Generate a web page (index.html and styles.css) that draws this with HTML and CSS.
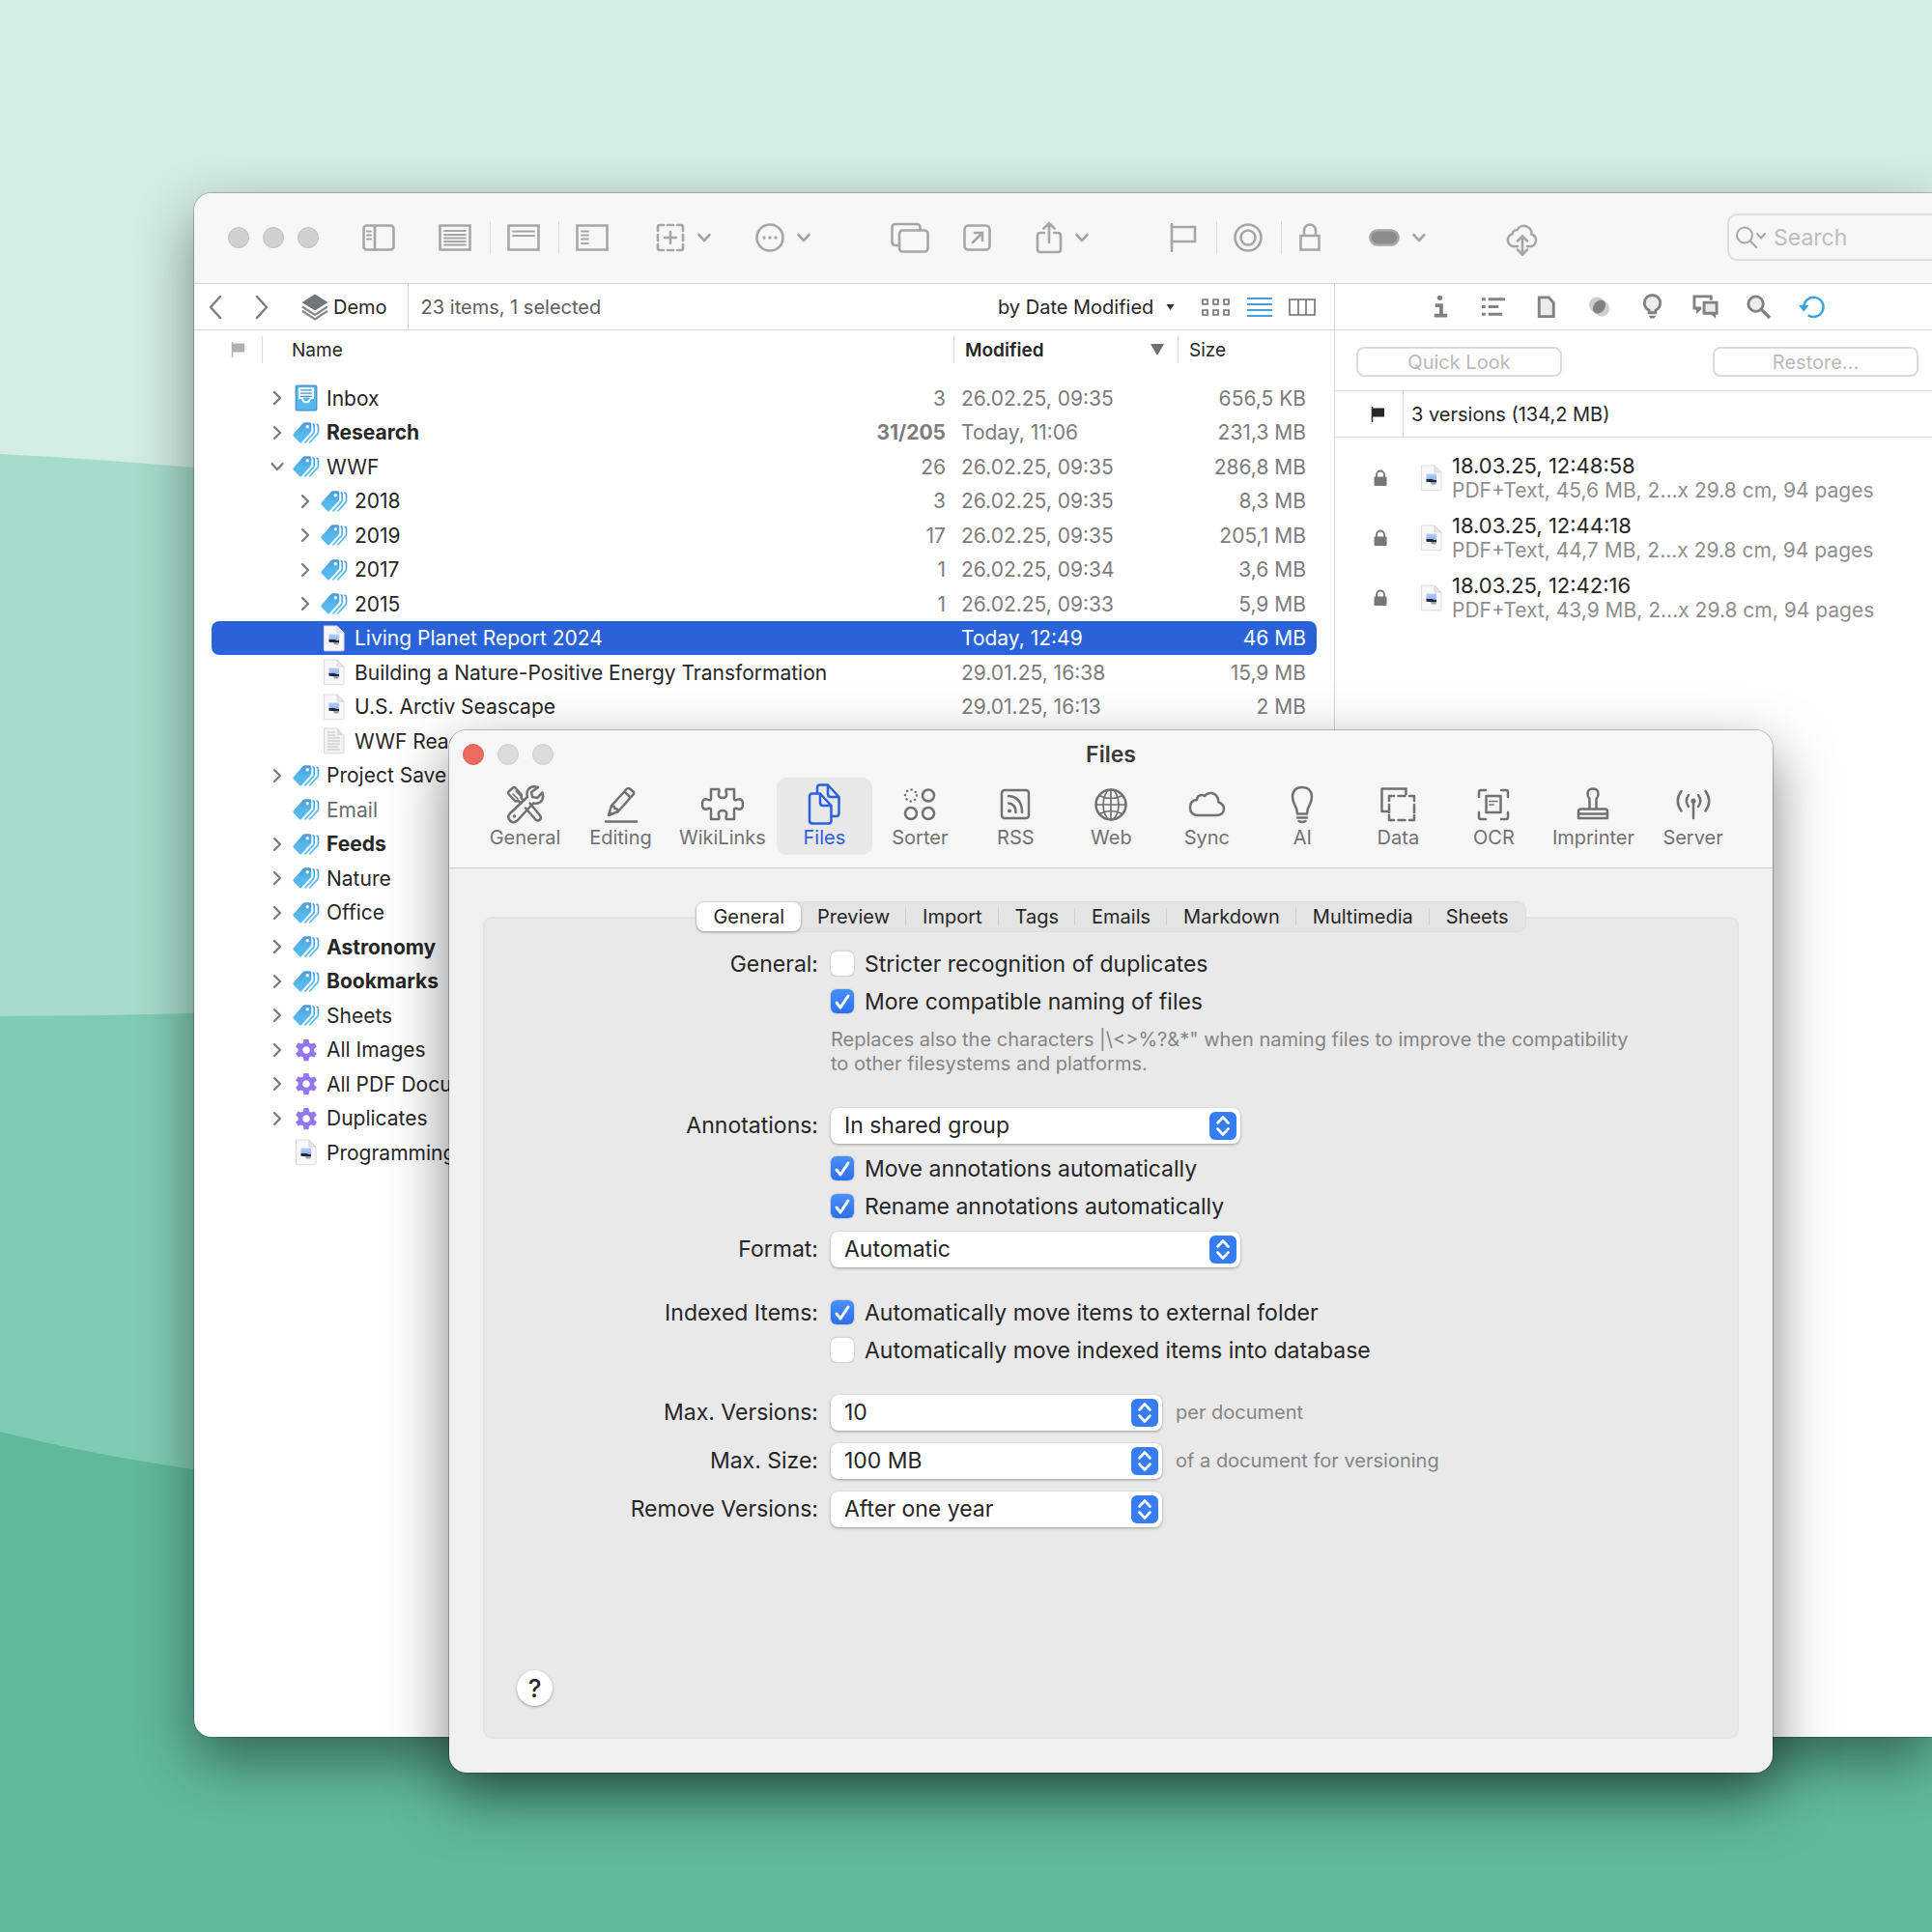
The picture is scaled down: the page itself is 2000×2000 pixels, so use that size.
FILE: index.html
```html
<!DOCTYPE html>
<html lang="en">
<head>
    <meta charset="UTF-8">
    <meta name="viewport" content="width=device-width, initial-scale=1.0">
    <title>Files</title>
    <link rel="stylesheet" href="styles.css">
</head>
<body>
    <!-- Shared icons -->
    <svg class="sprite" aria-hidden="true">
        <defs>
            <linearGradient id="blueFill" x1="0" y1="0" x2="0" y2="1">
                <stop offset="0" stop-color="#4a9bd3"/>
                <stop offset="0.5" stop-color="#55b6ec"/>
                <stop offset="1" stop-color="#58bcf3"/>
            </linearGradient>
            <linearGradient id="sky" x1="0" y1="0" x2="0" y2="1">
                <stop offset="0" stop-color="#b9cdf3"/>
                <stop offset="1" stop-color="#8fb2ea"/>
            </linearGradient>
        </defs>
        <symbol id="right" viewBox="0 0 14 16"><path d="M4 2l6 6-6 6" fill="none" stroke="currentColor" stroke-width="2.2" stroke-linecap="round" stroke-linejoin="round"/></symbol>
        <symbol id="down" viewBox="0 0 14 16"><path d="M1.500 5l5.500 6 5.500-6" fill="none" stroke="currentColor" stroke-width="2.200" stroke-linecap="round" stroke-linejoin="round"/></symbol>
        <symbol id="tags" viewBox="0 0 28 22">
            <path fill="url(#blueFill)" fill-rule="evenodd" d="M.6 12.600L10.500 1.300Q11.600.3 13 .3h4.500Q19.300.5 19.300 2.300V8.500Q19.300 9.700 18.500 10.600L9 21Q8 22 7 21L.8 14.400Q0 13.500.6 12.600zM15.200 3a1.700 1.700 0 1 0 .1 0z"/>
            <path fill="none" stroke="url(#blueFill)" stroke-width="1.700" d="M20.500 1.500q1.700.5 1.700 2V9.800q0 1-.7 1.800L12.500 21.500M24.500 2q2 .5 2 2.200v6.100q0 1-.7 1.800L17.300 21.500"/>
        </symbol>
        <symbol id="inbox" viewBox="0 0 22 26">
            <rect x="1" y="1" width="20" height="24" rx="1.500" fill="#56b7ee" stroke="#3d93cc" stroke-width="1.200"/>
            <path d="M3.500 3h15v11h-3q-.5 4-4.500 4t-4.500-4h-3z" fill="#fff"/>
            <path d="M5.500 5.500h11M5.500 8.500h11M5.500 11.500h11" fill="none" stroke="#3d93cc" stroke-width="1.300"/>
            <path d="M8 12.500h6q-.2 3.500-3 3.500t-3-3.500z" fill="#56b7ee"/>
        </symbol>
        <symbol id="gear" viewBox="0 0 24 24">
            <path fill="#9377ea" fill-rule="evenodd" d="M9.500 1h5l.6 3.400 2.200 1.200 3.200-1.200 2.400 4.200-2.600 2.200v2.400l2.600 2.200-2.400 4.200-3.200-1.200-2.200 1.200-.6 3.600h-5l-.6-3.600-2.200-1.200-3.200 1.200-2.400-4.200 2.600-2.200v-2.400L1.100 8.600l2.400-4.200 3.200 1.200 2.200-1.200zM12 8.200a3.800 3.800 0 1 0 .1 0z"/>
        </symbol>
        <symbol id="pdf" viewBox="0 0 24 28">
            <path d="M1.500 1H15l7 7v18q0 .8-.8.800H2.300q-.8 0-.8-.8z" fill="#f8f8f8" stroke="#dcdcdc"/>
            <path d="M15 1v7h7z" fill="#e6e6e6" stroke="#cfcfcf" stroke-width=".7"/>
            <path d="M6.500 9.500H17V16H6.500z" fill="url(#sky)"/>
            <path d="M6.500 15h6l2 1H17v2.500l-10.500-.8z" fill="#20283c"/>
            <path d="M11 18h5.500v2.500H12z" fill="#9a9da3"/>
        </symbol>
        <symbol id="textdoc" viewBox="0 0 24 28">
            <path d="M1.500 1H15l7 7v18q0 .8-.8.800H2.300q-.8 0-.8-.8z" fill="#f3f3f3" stroke="#d6d6d6"/>
            <path d="M15 1v7h7z" fill="#dedede"/>
            <path d="M5 5h8M5 8h8M5 11h13M5 14h13M5 17h13M5 20h11M5 23h13" stroke="#c2c2c2" stroke-width="1.200"/>
        </symbol>
        <symbol id="flag" viewBox="0 0 16 20"><path d="M1.500 2v16" stroke="currentColor" stroke-width="1.500"/><path d="M2 3.500h12v9H2z" fill="currentColor"/></symbol>
        <symbol id="locked" viewBox="0 0 16 20"><path d="M4 9V6.500a4 4 0 0 1 8 0V9" fill="none" stroke="currentColor" stroke-width="1.800"/><rect x="1.500" y="8.500" width="13" height="9.500" rx="1" fill="currentColor"/></symbol>
        <symbol id="chevron" viewBox="0 0 16 12"><path d="M2.500 3L8 9l5.500-6" fill="none" stroke="currentColor" stroke-width="2.600" stroke-linecap="round" stroke-linejoin="round"/></symbol>
    </svg>

    <div class="desktop">
        <svg class="wallpaper" viewBox="0 0 2000 2000" preserveAspectRatio="none" aria-hidden="true">
            <path fill="#a6dccb" d="M0 470Q100 475 200 484L900 560V1200H0z"/>
            <path fill="#80cbb3" d="M0 1052Q100 1052 200 1049L900 1020V1700H0z"/>
            <path fill="#5fb99a" d="M0 1482Q90 1505 200 1521L900 1640H2000V2000H0z"/>
        </svg>

        <main class="window browser">
            <header class="toolbar">
                <div class="lights"><i></i><i></i><i></i></div>
                <div class="tools">
                    <button type="button" aria-label="Sidebar"><svg width="34" height="28" viewBox="0 0 34 28"><rect x="1.500" y="1.500" width="31" height="25" rx="3"/><path d="M13 2v24"/><path class="thin" d="M5 7.500h4M5 11.500h4M5 15.500h4"/></svg></button>
                </div>
                <div class="tools joined">
                    <button type="button" aria-label="List"><svg width="34" height="28" viewBox="0 0 34 28"><path d="M1.500 1.500h31v25h-31z"/><path class="thin" d="M6 7h22M6 11h22M6 14.500h22M6 18h22M6 21.500h22"/></svg></button>
                    <button type="button" aria-label="Preview"><svg width="34" height="28" viewBox="0 0 34 28"><path d="M1.500 1.500h31v25h-31z"/><path class="thin" d="M6 7.500h22M6 12h22"/></svg></button>
                    <button type="button" aria-label="Split"><svg width="34" height="28" viewBox="0 0 34 28"><path d="M1.500 1.500h31v25h-31z"/><path class="thin" d="M6 7.500h7M6 11.500h7M6 15.500h7M6 20h7"/></svg></button>
                </div>
                <div class="tools">
                    <button type="button" aria-label="New item"><svg width="30" height="30" viewBox="0 0 30 30"><path d="M2 8V4q0-2 2-2h4M12 2h6M22 2h4q2 0 2 2v4M28 12v6M28 22v4q0 2-2 2h-4M18 28h-6M8 28H4q-2 0-2-2v-4M2 18v-6M15 9v12M9 15h12"/></svg><svg class="chev" width="16" height="12"><use href="#chevron"/></svg></button>
                </div>
                <div class="tools">
                    <button type="button" aria-label="Actions"><svg width="30" height="30" viewBox="0 0 30 30"><circle cx="15" cy="15" r="13.500"/><path class="dots" d="M9 15h.01M15 15h.01M21 15h.01"/></svg><svg class="chev" width="16" height="12"><use href="#chevron"/></svg></button>
                </div>
                <div class="tools apart">
                    <button type="button" aria-label="Windows"><svg width="40" height="32" viewBox="0 0 40 32"><path d="M8 24H5q-3.500 0-3.500-3.500v-15Q1.500 2 5 2h22q3.500 0 3.500 3.500V8"/><rect x="9" y="8.500" width="29.500" height="22" rx="3.500"/></svg></button>
                </div>
                <div class="tools near">
                    <button type="button" aria-label="Open"><svg width="30" height="28" viewBox="0 0 30 28"><rect x="1.500" y="1.500" width="26" height="25" rx="4"/><path d="M10 19l9.500-9.500M12 9h8v8"/></svg></button>
                </div>
                <div class="tools">
                    <button type="button" aria-label="Share"><svg width="28" height="34" viewBox="0 0 28 34"><path d="M9 12H5q-3 0-3 3v14q0 3 3 3h18q3 0 3-3V15q0-3-3-3h-4M14 22V2M8.500 7.500L14 2l5.500 5.500"/></svg><svg class="chev" width="16" height="12"><use href="#chevron"/></svg></button>
                </div>
                <div class="tools joined apart">
                    <button type="button" aria-label="Flag"><svg width="30" height="30" viewBox="0 0 30 30"><path d="M3 1v28M3 4h24v15H3"/></svg></button>
                    <button type="button" aria-label="Read"><svg width="30" height="30" viewBox="0 0 30 30"><circle cx="15" cy="15" r="13.500"/><circle cx="15" cy="15" r="7.500"/></svg></button>
                    <button type="button" aria-label="Lock"><svg width="24" height="30" viewBox="0 0 24 30"><path d="M2.500 13h19v14.500h-19zM6 13V7.500a6 6 0 0 1 12 0V13"/></svg></button>
                </div>
                <div class="tools">
                    <button type="button" aria-label="Label"><svg width="32" height="18" viewBox="0 0 32 18"><rect class="pill" x="1.500" y="1.500" width="29" height="15" rx="7.500"/></svg><svg class="chev" width="16" height="12"><use href="#chevron"/></svg></button>
                </div>
                <div class="tools apart">
                    <button type="button" aria-label="Synchronize"><svg class="cloud" width="34" height="34" viewBox="0 0 34 34"><path d="M12 24H8a6.500 6.500 0 0 1-1.500-12.700 5 5 0 0 1 5-4.300 8 8 0 0 1 15 4.500A6.500 6.500 0 0 1 26 24h-4M17 14v18M12 18.500l5-5 5 5M12 27.500l5 5 5-5"/></svg></button>
                </div>
                <label class="search">
                    <svg width="34" height="26" viewBox="0 0 34 26"><circle cx="10" cy="10.500" r="8"/><path d="M16 16.500l6 6.500M23 9l4 4.500L31 9"/></svg>
                    <input type="search" placeholder="Search" aria-label="Search">
                </label>
            </header>

            <div class="columns">
                <section class="list">
                    <nav class="pathbar">
                        <button type="button" class="nav" aria-label="Back"><svg width="14" height="26" viewBox="0 0 14 26"><path d="M12 2L2 13l10 11"/></svg></button>
                        <button type="button" class="nav" aria-label="Forward"><svg width="14" height="26" viewBox="0 0 14 26"><path d="M2 2l10 11L2 24"/></svg></button>
                        <span class="database">
                            <svg width="28" height="28" viewBox="0 0 28 28"><path d="M14 .5L27.500 9 14 17.500.5 9z" fill="#6f7779"/><path d="M1 13.500l13 8.500 13-8.500M1 18l13 8.500L27 18" fill="none" stroke="#85898b" stroke-width="2.200"/></svg>
                            Demo
                        </span>
                        <span class="status">23 items, 1 selected</span>
                        <select class="sort" aria-label="Sort"><option>by Date Modified</option></select>
                        <div class="views">
                            <button type="button" aria-label="Icons"><svg width="30" height="18" viewBox="0 0 30 18"><path d="M1 1h5v5H1zM12 1h5v5h-5zM23 1h5v5h-5zM1 12h5v5H1zM12 12h5v5h-5zM23 12h5v5h-5z"/></svg></button>
                            <button type="button" class="on" aria-label="List"><svg width="26" height="20" viewBox="0 0 26 20"><path stroke-width="1.800" d="M0 1h26M0 7h26M0 13h26M0 19h26"/></svg></button>
                            <button type="button" aria-label="Columns"><svg width="28" height="18" viewBox="0 0 28 18"><path d="M1 1h26v16H1zM10 1v16M18 1v16"/></svg></button>
                        </div>
                    </nav>

                    <table class="items">
                        <thead>
                            <tr>
                                <th class="c-flag"><svg width="16" height="20"><use href="#flag"/></svg></th>
                                <th class="c-name" colspan="2"><span>Name</span></th>
                                <th class="c-date sorted"><span>Modified <svg width="14" height="12" viewBox="0 0 14 12"><path d="M0 0h14L7 12z" fill="#6f6f6f"/></svg></span></th>
                                <th class="c-size"><span>Size</span></th>
                            </tr>
                        </thead>
                        <tbody>
                            <tr><td></td><td><span class="item"><svg class="arrow"><use href="#right"/></svg><svg class="icon"><use href="#inbox"/></svg>Inbox</span></td><td>3</td><td>26.02.25, 09:35</td><td>656,5 KB</td></tr>
                            <tr class="unread"><td></td><td><span class="item"><svg class="arrow"><use href="#right"/></svg><svg class="icon tag"><use href="#tags"/></svg>Research</span></td><td>31/205</td><td>Today, 11:06</td><td>231,3 MB</td></tr>
                            <tr><td></td><td><span class="item"><svg class="arrow"><use href="#down"/></svg><svg class="icon tag"><use href="#tags"/></svg>WWF</span></td><td>26</td><td>26.02.25, 09:35</td><td>286,8 MB</td></tr>
                            <tr class="sub"><td></td><td><span class="item"><svg class="arrow"><use href="#right"/></svg><svg class="icon tag"><use href="#tags"/></svg>2018</span></td><td>3</td><td>26.02.25, 09:35</td><td>8,3 MB</td></tr>
                            <tr class="sub"><td></td><td><span class="item"><svg class="arrow"><use href="#right"/></svg><svg class="icon tag"><use href="#tags"/></svg>2019</span></td><td>17</td><td>26.02.25, 09:35</td><td>205,1 MB</td></tr>
                            <tr class="sub"><td></td><td><span class="item"><svg class="arrow"><use href="#right"/></svg><svg class="icon tag"><use href="#tags"/></svg>2017</span></td><td>1</td><td>26.02.25, 09:34</td><td>3,6 MB</td></tr>
                            <tr class="sub"><td></td><td><span class="item"><svg class="arrow"><use href="#right"/></svg><svg class="icon tag"><use href="#tags"/></svg>2015</span></td><td>1</td><td>26.02.25, 09:33</td><td>5,9 MB</td></tr>
                            <tr class="sub selected"><td></td><td><span class="item"><svg class="arrow"></svg><svg class="icon"><use href="#pdf"/></svg>Living Planet Report 2024</span></td><td></td><td>Today, 12:49</td><td>46 MB</td></tr>
                            <tr class="sub"><td></td><td><span class="item"><svg class="arrow"></svg><svg class="icon"><use href="#pdf"/></svg>Building a Nature-Positive Energy Transformation</span></td><td></td><td>29.01.25, 16:38</td><td>15,9 MB</td></tr>
                            <tr class="sub"><td></td><td><span class="item"><svg class="arrow"></svg><svg class="icon"><use href="#pdf"/></svg>U.S. Arctiv Seascape</span></td><td></td><td>29.01.25, 16:13</td><td>2 MB</td></tr>
                            <tr class="sub"><td></td><td><span class="item"><svg class="arrow"></svg><svg class="icon"><use href="#textdoc"/></svg>WWF Read</span></td><td></td><td></td><td></td></tr>
                            <tr><td></td><td><span class="item"><svg class="arrow"><use href="#right"/></svg><svg class="icon tag"><use href="#tags"/></svg>Project Save</span></td><td></td><td></td><td></td></tr>
                            <tr class="muted"><td></td><td><span class="item"><svg class="arrow"></svg><svg class="icon tag"><use href="#tags"/></svg>Email</span></td><td></td><td></td><td></td></tr>
                            <tr class="unread"><td></td><td><span class="item"><svg class="arrow"><use href="#right"/></svg><svg class="icon tag"><use href="#tags"/></svg>Feeds</span></td><td></td><td></td><td></td></tr>
                            <tr><td></td><td><span class="item"><svg class="arrow"><use href="#right"/></svg><svg class="icon tag"><use href="#tags"/></svg>Nature</span></td><td></td><td></td><td></td></tr>
                            <tr><td></td><td><span class="item"><svg class="arrow"><use href="#right"/></svg><svg class="icon tag"><use href="#tags"/></svg>Office</span></td><td></td><td></td><td></td></tr>
                            <tr class="unread"><td></td><td><span class="item"><svg class="arrow"><use href="#right"/></svg><svg class="icon tag"><use href="#tags"/></svg>Astronomy</span></td><td></td><td></td><td></td></tr>
                            <tr class="unread"><td></td><td><span class="item"><svg class="arrow"><use href="#right"/></svg><svg class="icon tag"><use href="#tags"/></svg>Bookmarks</span></td><td></td><td></td><td></td></tr>
                            <tr><td></td><td><span class="item"><svg class="arrow"><use href="#right"/></svg><svg class="icon tag"><use href="#tags"/></svg>Sheets</span></td><td></td><td></td><td></td></tr>
                            <tr><td></td><td><span class="item"><svg class="arrow"><use href="#right"/></svg><svg class="icon"><use href="#gear"/></svg>All Images</span></td><td></td><td></td><td></td></tr>
                            <tr><td></td><td><span class="item"><svg class="arrow"><use href="#right"/></svg><svg class="icon"><use href="#gear"/></svg>All PDF Docu</span></td><td></td><td></td><td></td></tr>
                            <tr><td></td><td><span class="item"><svg class="arrow"><use href="#right"/></svg><svg class="icon"><use href="#gear"/></svg>Duplicates</span></td><td></td><td></td><td></td></tr>
                            <tr><td></td><td><span class="item"><svg class="arrow"></svg><svg class="icon"><use href="#pdf"/></svg>Programming</span></td><td></td><td></td><td></td></tr>
                        </tbody>
                    </table>
                </section>

                <aside class="inspector">
                    <nav class="inspector-tabs">
                        <button type="button" aria-label="Info"><svg viewBox="0 0 28 28"><path d="M9 12.500h6.500V23M8 23.500h14" fill="none" stroke="currentColor" stroke-width="4"/><circle cx="14" cy="4.500" r="2.800" fill="currentColor"/></svg></button>
                        <button type="button" aria-label="Contents"><svg viewBox="0 0 28 28"><path d="M2 6h4M2 14h4M2 22h4M9 6h18M9 14h11M9 22h15" fill="none" stroke="currentColor" stroke-width="3"/></svg></button>
                        <button type="button" aria-label="Document"><svg viewBox="0 0 28 28"><path d="M6.500 4H17l5 6v14.500H6.500z" fill="#ececec" stroke="currentColor" stroke-width="3"/></svg></button>
                        <button type="button" aria-label="Concordance"><svg viewBox="0 0 28 28"><circle cx="11.500" cy="12" r="8.500" fill="#cfcfcf"/><circle cx="16.500" cy="16" r="8.500" fill="#cfcfcf"/><ellipse cx="14" cy="14" rx="6" ry="8" transform="rotate(39 14 14)" fill="currentColor"/></svg></button>
                        <button type="button" aria-label="See also"><svg viewBox="0 0 28 28"><path d="M10.500 20.500V18Q5.500 15 5.500 10a8.500 8.500 0 0 1 17 0q0 5-5 8v2.500z" fill="#ececec" stroke="currentColor" stroke-width="3"/><path d="M10 23.500h8l-2 3h-4z" fill="currentColor"/></svg></button>
                        <button type="button" aria-label="Annotations"><svg viewBox="0 0 28 28"><path d="M9.500 15.500H2V3h18v4" fill="none" stroke="currentColor" stroke-width="3"/><path d="M4 16h6l-5.500 6zM19 21h6v6z" fill="currentColor"/><path d="M12.500 9.500H26V21H12.500z" fill="#ececec" stroke="currentColor" stroke-width="3"/></svg></button>
                        <button type="button" aria-label="Find"><svg viewBox="0 0 28 28"><circle cx="11" cy="11" r="8" fill="#ececec" stroke="currentColor" stroke-width="3"/><path d="M17 17l9 9" stroke="currentColor" stroke-width="3.600"/></svg></button>
                        <button type="button" class="on" aria-label="Versions"><svg viewBox="0 0 28 28"><path d="M5.500 15A10.500 10.500 0 1 1 10 23" fill="none" stroke="currentColor" stroke-width="2.600"/><path d="M0 12.500h11L5.500 19.500z" fill="currentColor"/></svg></button>
                    </nav>
                    <div class="inspector-actions">
                        <button type="button" disabled>Quick Look</button>
                        <button type="button" disabled>Restore...</button>
                    </div>
                    <div class="summary">
                        <span class="summary-flag"><svg width="16" height="20"><use href="#flag"/></svg></span>
                        <span>3 versions (134,2 MB)</span>
                    </div>
                    <ul class="versions">
                        <li><svg class="lock"><use href="#locked"/></svg><svg class="icon"><use href="#pdf"/></svg><p>18.03.25, 12:48:58<small>PDF+Text, 45,6 MB, 2...x 29.8 cm, 94 pages</small></p></li>
                        <li><svg class="lock"><use href="#locked"/></svg><svg class="icon"><use href="#pdf"/></svg><p>18.03.25, 12:44:18<small>PDF+Text, 44,7 MB, 2...x 29.8 cm, 94 pages</small></p></li>
                        <li><svg class="lock"><use href="#locked"/></svg><svg class="icon"><use href="#pdf"/></svg><p>18.03.25, 12:42:16<small>PDF+Text, 43,9 MB, 2...x 29.8 cm, 94 pages</small></p></li>
                    </ul>
                </aside>
            </div>
        </main>

        <section class="window settings" role="dialog" aria-labelledby="settingsTitle">
            <header class="settings-head">
                <div class="titlebar">
                    <div class="lights"><i class="close"></i><i></i><i></i></div>
                    <h1 id="settingsTitle">Files</h1>
                </div>
                <nav class="panes">
                    <button type="button"><svg viewBox="0 0 44 44"><path d="M26.500 20.500L37 33q2 2.500 0 4.500t-4.500 0L22 25.500M17.500 20.500l-3-2.500-3 .5L4.500 11q-1-1 0-2.500L9 4.500q1.500-1 2.500 0L18 12l-.5 3 2.500 3"/><path class="thin" d="M9 11l5 5M12 8l5 5"/><path d="M35 4q-8-2.500-11 4-1 3 0 6L6 31q-3.500 4 0 7.500t7.500 0L30 20.500q4 1 7-1 4.500-3.500 2.500-10l-5.500 5.500-5-1-1-5z"/><circle class="dot" cx="10.500" cy="34" r="1.800"/></svg>General</button>
                    <button type="button"><svg viewBox="0 0 44 44"><path d="M9 33l3-10L28 5.500q1.500-1 3 0l3.500 3q1.500 1.500 0 3L19 29zM12 23q3 0 3.500 3 3 0 3.500 3M25.500 8.500l6 6M6 39.500h32M9 33l3-1-2-2z"/></svg>Editing</button>
                    <button type="button"><svg viewBox="0 0 44 44"><path d="M10 6h8q1 1 0 4-1 5 4 5t4-5q-1-3 0-4h8v10.500q1 1.500 4 0 5-1 5 5t-5 5q-3-1.500-4 0V37h-8q-1-1 0-4 1-5-4-5t-4 5q1 3 0 4h-8V26.500q-1-1.500-4 0-5 1-5-5t5-5q3 1.500 4 0z"/></svg>WikiLinks</button>
                    <button type="button" class="current"><svg viewBox="0 0 44 44"><path d="M15 10V4.500Q15 1.500 18 1.500h8L37.500 14v17q0 3-3 3H30M26 1.500V11q0 3 3 3h8.500"/><path d="M7 13.500q0-3 3-3h8L29.500 23v15.500q0 3-3 3H10q-3 0-3-3zM18 10.500V20q0 3 3 3h8.500"/></svg>Files</button>
                    <button type="button"><svg viewBox="0 0 44 44"><circle cx="13" cy="12.500" r="6" stroke-dasharray=".1 4.600"/><circle cx="31" cy="12.500" r="6"/><circle cx="13" cy="31" r="6"/><circle cx="31" cy="31" r="6"/></svg>Sorter</button>
                    <button type="button"><svg viewBox="0 0 44 44"><rect x="8" y="7" width="28" height="29" rx="3"/><path d="M15 13q14 1 14 17M15 20.500q7.500 1 7.500 9.500"/><circle class="dot" cx="16" cy="28.500" r="2"/></svg>RSS</button>
                    <button type="button"><svg viewBox="0 0 44 44"><circle cx="22" cy="22" r="15.500"/><path class="thin" d="M22 6.500v31M6.500 22h31M10 12.500q12 6 24 0M10 31.500q12-6 24 0"/><ellipse class="thin" cx="22" cy="22" rx="8" ry="15.500"/></svg>Web</button>
                    <button type="button"><svg viewBox="0 0 44 44"><path d="M13 33q-8-.5-8-8t7-8q.5-5 5-5 2 0 3 1 3-3.500 7-3 7 1 7.500 9.500Q40 21.500 40 26.500q-.5 6-7 6.500z"/></svg>Sync</button>
                    <button type="button"><svg viewBox="0 0 44 44"><path d="M17 31.500q0-5-3-10-2-4-2-8Q12.500 4 22 4t10 9.500q0 4-2 8-3 5-3 10zM17 35.500h10M18.500 39q3.500 2 7 0"/></svg>AI</button>
                    <button type="button"><svg viewBox="0 0 44 44"><path d="M11 29H5.500V5.500h25V11"/><path d="M13 18v-5h5M22.500 13h7M34 13h5v5M39 22v8M39 33v5h-5M29.500 38h-7M18 38h-5v-5M13 30v-8"/></svg>Data</button>
                    <button type="button"><svg viewBox="0 0 44 44"><path d="M7 14V9q0-2 2-2h5M30 7h5q2 0 2 2v5M37 30v5q0 2-2 2h-5M14 37H9q-2 0-2-2v-5M14.500 13h15v17h-15z"/><path class="thin" d="M18 18.500h8M18 22h4"/></svg>OCR</button>
                    <button type="button"><svg viewBox="0 0 44 44"><path d="M7 36v-7q0-2.500 2.500-2.500h9V16q-2.500-3-2-6 .5-4.500 5.500-4.500t5.500 4.500q.5 3-2 6v10.500h9q2.500 0 2.500 2.500v7zM7 31.500h30M18.500 26.500h7"/></svg>Imprinter</button>
                    <button type="button"><svg viewBox="0 0 44 44"><circle class="dot" cx="22" cy="18" r="2.600"/><path d="M22 19v17M17 12q-4.500 6 0 12M27 12q4.500 6 0 12M9.500 28.500Q2 18 9.500 8M34.500 28.500Q42 18 34.500 8"/></svg>Server</button>
                </nav>
            </header>

            <div class="settings-body">
                <nav class="segments">
                    <button type="button" class="current">General</button>
                    <button type="button">Preview</button>
                    <button type="button">Import</button>
                    <button type="button">Tags</button>
                    <button type="button">Emails</button>
                    <button type="button">Markdown</button>
                    <button type="button">Multimedia</button>
                    <button type="button">Sheets</button>
                </nav>

                <form class="group">
                    <div class="row">
                        <span class="caption">General:</span>
                        <label class="check"><input type="checkbox">Stricter recognition of duplicates</label>
                    </div>
                    <div class="row">
                        <label class="check"><input type="checkbox" checked>More compatible naming of files</label>
                    </div>
                    <p class="note">Replaces also the characters |\&lt;&gt;%?&amp;*" when naming files to improve the compatibility to other filesystems and platforms.</p>

                    <div class="row pop">
                        <label class="caption" for="annotations">Annotations:</label>
                        <select id="annotations" class="large"><option>In shared group</option></select>
                    </div>
                    <div class="row">
                        <label class="check"><input type="checkbox" checked>Move annotations automatically</label>
                    </div>
                    <div class="row">
                        <label class="check"><input type="checkbox" checked>Rename annotations automatically</label>
                    </div>
                    <div class="row pop">
                        <label class="caption" for="format">Format:</label>
                        <select id="format" class="large"><option>Automatic</option></select>
                    </div>

                    <div class="row first">
                        <span class="caption">Indexed Items:</span>
                        <label class="check"><input type="checkbox" checked>Automatically move items to external folder</label>
                    </div>
                    <div class="row">
                        <label class="check"><input type="checkbox">Automatically move indexed items into database</label>
                    </div>

                    <div class="row pop first">
                        <label class="caption" for="maxVersions">Max. Versions:</label>
                        <select id="maxVersions"><option>10</option></select>
                        <span class="hint">per document</span>
                    </div>
                    <div class="row pop">
                        <label class="caption" for="maxSize">Max. Size:</label>
                        <select id="maxSize"><option>100 MB</option></select>
                        <span class="hint">of a document for versioning</span>
                    </div>
                    <div class="row pop">
                        <label class="caption" for="removeVersions">Remove Versions:</label>
                        <select id="removeVersions"><option>After one year</option></select>
                    </div>
                    <button type="button" class="help" aria-label="Help">?</button>
                </form>
            </div>
        </section>
    </div>
</body>
</html>
```
FILE: styles.css
```css
* {
    box-sizing: border-box;
}
body {
    margin: 0;
    font-family: Inter, "Liberation Sans", sans-serif;
    font-size: 20px;
    color: #262626;
}
button, input, select {
    font: inherit;
    color: inherit;
}
button {
    padding: 0;
    border: none;
    background: none;
}
svg {
    display: block;
    flex: none;
}
.sprite {
    position: absolute;
    width: 0;
    height: 0;
}
.desktop {
    position: relative;
    min-height: 100vh;
    overflow: hidden;
    background: #d3ede4;
}
.wallpaper {
    position: absolute;
    inset: 0;
    width: 100%;
    height: 100%;
}

/* Windows */
.window {
    position: absolute;
    display: flex;
    flex-direction: column;
}
.browser {
    top: 200px;
    left: 201px;
    right: 0;
    bottom: 202px;
    overflow: hidden;
    border-radius: 18px 0 0 18px;
    background: #fff;
    box-shadow: 0 0 0 1px rgba(0,0,0,0.2), 0 24px 60px rgba(0,0,0,0.45);
}
.lights {
    display: flex;
    gap: 14px;
}
.lights i {
    width: 22px;
    height: 22px;
    border: 1px solid #bfbfbf;
    border-radius: 50%;
    background: #d0d0d0;
}

/* Toolbar */
.toolbar {
    display: flex;
    align-items: center;
    height: 94px;
    padding: 0 0 2px 35px;
    border-bottom: 1px solid #d6d6d6;
    background: #f7f7f7;
    color: #a6a6a6;
}
.tools {
    display: flex;
    align-items: center;
    margin-left: 45px;
}
.joined + .tools {
    margin-left: 49px;
}
.tools.apart {
    margin-left: 82px;
}
.tools.near {
    margin-left: 35px;
}
.tools button {
    display: flex;
    align-items: center;
    gap: 12px;
}
.tools svg, .search svg {
    fill: none;
    stroke: currentColor;
    stroke-width: 2.6;
    stroke-linecap: round;
}
.tools .thin {
    stroke-width: 1.8;
}
.tools .dots {
    stroke-width: 3.4;
}
.tools .pill {
    fill: #8c8c8c;
}
.tools .cloud {
    margin-top: 5px;
}
.joined button + button {
    margin-left: 19px;
    padding-left: 18px;
    background: linear-gradient(#dcdcdc, #dcdcdc) left / 1px 100% no-repeat;
}
.joined button {
    height: 34px;
}
.search {
    display: flex;
    align-items: center;
    gap: 6px;
    width: 212px;
    height: 49px;
    margin-left: auto;
    padding-left: 6px;
    border: 2px solid #dfdfdf;
    border-right: none;
    border-radius: 10px 0 0 10px;
}
.search svg {
    stroke-width: 2;
}
.search input {
    flex: 1;
    min-width: 0;
    padding: 0;
    border: none;
    outline: none;
    background: none;
    font-size: 23px;
}
.search input::placeholder {
    color: #bdbdbd;
}

/* Item list */
.columns {
    display: flex;
    flex: 1;
}
.list {
    flex: 1;
    min-width: 0;
}
.pathbar {
    display: flex;
    align-items: center;
    height: 48px;
    padding: 0 19px 0 15px;
    border-bottom: 1px solid #d6d6d6;
}
.nav {
    margin-right: 34px;
}
.nav svg {
    fill: none;
    stroke: #7d7d7d;
    stroke-width: 2.4;
    stroke-linecap: round;
    stroke-linejoin: round;
}
.database {
    display: flex;
    align-items: center;
    align-self: stretch;
    gap: 5px;
    padding-right: 21px;
    border-right: 1px solid #d6d6d6;
}
.status {
    margin-left: 13px;
    color: #5e5e5e;
}
.sort {
    appearance: none;
    margin-left: auto;
    padding: 0 23px 0 0;
    border: none;
    background: url("data:image/svg+xml,%3Csvg xmlns='http://www.w3.org/2000/svg' viewBox='0 0 8 6'%3E%3Cpath d='M0 0h8L4 6z' fill='%23333'/%3E%3C/svg%3E") right 2px center / 9px 6px no-repeat;
}
.views {
    display: flex;
    align-items: center;
    gap: 17px;
    margin-left: 26px;
    color: #6f6f6f;
}
.views svg {
    fill: none;
    stroke: currentColor;
    stroke-width: 1.6;
}
.views .on, .inspector-tabs .on {
    color: #3ea2dd;
}
.items {
    width: calc(100% - 36px);
    margin: 0 18px;
    border-spacing: 0;
    table-layout: fixed;
    white-space: nowrap;
    font-size: 21px;
    color: #7c7c7c;
}
.items th {
    height: 40px;
    padding: 0;
    font-size: 19px;
    font-weight: 400;
    text-align: left;
    color: #262626;
}
.items th span {
    display: flex;
    align-items: center;
    height: 28px;
    padding-left: 11px;
    border-left: 1px solid #dadada;
}
.items .c-flag {
    width: 52px;
    padding-left: 20px;
    color: #b0b0b0;
}
.items .c-name span {
    padding-left: 30px;
}
.items .c-date {
    width: 232px;
}
.items .c-size {
    width: 144px;
}
.items .sorted span {
    justify-content: space-between;
    padding-right: 14px;
    font-weight: 600;
}
.items tbody::before {
    content: "";
    display: block;
    height: 12px;
}
.items td {
    height: 35px;
    padding: 0;
}
.items tr:nth-child(odd) td {
    height: 36px;
}
.items td:nth-child(3), .items td:nth-child(5) {
    text-align: right;
}
.items td:nth-child(3) {
    padding-right: 8px;
}
.items td:nth-child(4) {
    padding-left: 8px;
}
.items td:nth-child(5) {
    padding-right: 11px;
}
.item {
    display: flex;
    align-items: center;
    color: #262626;
}
.arrow {
    width: 14px;
    height: 16px;
    margin: 0 11px 0 9px;
    color: #7a7a7a;
}
.sub .arrow {
    margin-left: 38px;
}
.icon {
    width: 24px;
    height: 28px;
    margin-right: 9px;
}
.icon.tag {
    width: 28px;
    margin: 0 7px 0 -2px;
}
.unread td, .unread .item {
    font-weight: 700;
}
.unread td:nth-child(n+4) {
    font-weight: 400;
}
.muted .item {
    color: #6a6a6a;
}
.selected td, .selected .item {
    background: #2962d9;
    color: #fff;
}
.selected td:first-child {
    border-radius: 8px 0 0 8px;
}
.selected td:last-child {
    border-radius: 0 8px 8px 0;
}

/* Inspector */
.inspector {
    width: 619px;
    border-left: 1px solid #d6d6d6;
}
.inspector-tabs {
    display: flex;
    align-items: center;
    justify-content: center;
    gap: 28px;
    height: 48px;
    padding-right: 17px;
    border-bottom: 1px solid #d6d6d6;
    color: #828282;
}
.inspector-tabs svg {
    width: 27px;
    height: 27px;
}
.inspector-actions {
    display: flex;
    justify-content: space-between;
    padding: 17px 14px 14px 22px;
    border-bottom: 1px solid #dcdcdc;
}
.inspector-actions button {
    width: 213px;
    height: 31px;
    border: 2px solid #dcdcdc;
    border-radius: 8px;
    line-height: 20px;
    color: #b9b9b9;
}
.summary {
    display: flex;
    align-items: center;
    height: 48px;
    border-bottom: 1px solid #dcdcdc;
}
.summary-flag {
    display: flex;
    align-items: center;
    justify-content: flex-end;
    align-self: stretch;
    width: 71px;
    margin-right: 8px;
    padding-right: 17px;
    border-right: 1px solid #dcdcdc;
}
.versions {
    margin: 0;
    padding: 17px 14px 0 39px;
    list-style: none;
    font-size: 22px;
}
.versions li {
    display: flex;
    align-items: center;
    height: 50px;
    margin-bottom: 12px;
}
.versions .lock {
    width: 16px;
    height: 20px;
    margin-right: 33px;
    color: #777;
}
.versions p {
    margin: 0;
    line-height: 25px;
    white-space: nowrap;
}
.versions small {
    display: block;
    font-size: 21px;
    color: #8f8f8f;
}

/* Settings window */
.settings {
    top: 756px;
    left: 465px;
    right: 165px;
    bottom: 165px;
    border-radius: 18px;
    background: #f0f0f0;
    box-shadow: 0 0 0 1px rgba(0,0,0,0.22), 0 24px 60px rgba(0,0,0,0.5);
}
.settings-head {
    height: 143px;
    border-bottom: 1px solid #cdcdcd;
    border-radius: 18px 18px 0 0;
    background: #f6f6f6;
}
.titlebar {
    display: flex;
    align-items: center;
    height: 49px;
    padding: 0 14px;
}
.titlebar .lights {
    flex: 1;
}
.titlebar::after {
    content: "";
    flex: 1;
}
.titlebar i {
    background: #dcdcdc;
    border-color: #cfcfcf;
}
.titlebar .close {
    background: #ec6a5e;
    border-color: #df5f53;
}
.titlebar h1 {
    margin: 0;
    font-size: 23px;
    font-weight: 600;
    color: #3a3a3a;
}
.panes {
    display: flex;
    padding-left: 29px;
}
.panes button {
    display: flex;
    flex-direction: column;
    align-items: center;
    min-width: 99px;
    height: 80px;
    padding: 6px 11px 0;
    border-radius: 10px;
    line-height: 24px;
    color: #717171;
}
.panes svg {
    width: 44px;
    height: 44px;
    fill: none;
    stroke: currentColor;
    stroke-width: 2.5;
    stroke-linecap: round;
    stroke-linejoin: round;
}
.panes .thin {
    stroke-width: 1.7;
}
.panes .dot {
    fill: currentColor;
    stroke: none;
}
.panes .current {
    background: #e8e8e8;
    color: #2a60dc;
}
.settings-body {
    display: flex;
    flex-direction: column;
    flex: 1;
    align-items: center;
    padding: 34px 35px 35px;
}
.segments {
    display: flex;
    z-index: 1;
    height: 32px;
    margin-bottom: -16px;
    border: 1px solid #dedede;
    border-radius: 9px;
    background: #e4e4e4;
}
.segments button {
    padding: 0 17px;
    background: linear-gradient(#cfcfcf, #cfcfcf) right / 1px 18px no-repeat;
}
.segments button:last-child {
    background: none;
}
.segments .current {
    border-radius: 8px;
    background: #fff;
    box-shadow: 0 1px 3px rgba(0,0,0,0.35);
}
.group {
    display: flex;
    flex-direction: column;
    flex: 1;
    align-self: stretch;
    padding: 27px 33px 32px;
    border: 2px solid #e3e3e3;
    border-radius: 9px;
    background: #e9e9e9;
    font-size: 23px;
}
.row, .note {
    margin: 0 0 0 325px;
}
.row {
    display: flex;
    align-items: center;
    height: 39px;
}
.row.pop {
    height: 50px;
}
.row.first {
    margin-top: 21px;
}
.row.pop.first {
    margin-top: 20px;
}
.caption {
    width: 320px;
    margin: 0 13px 0 -333px;
    text-align: right;
}
.check {
    display: flex;
    align-items: center;
    gap: 11px;
}
.check input {
    appearance: none;
    width: 24px;
    height: 25px;
    margin: 0;
    border-radius: 6px;
    background: #fff;
    box-shadow: 0 0 2px rgba(0,0,0,0.35);
}
.check input:checked {
    background: url("data:image/svg+xml,%3Csvg xmlns='http://www.w3.org/2000/svg' viewBox='0 0 24 24'%3E%3Cpath d='M6 13l4 5 8-12' fill='none' stroke='white' stroke-width='3' stroke-linecap='round' stroke-linejoin='round'/%3E%3C/svg%3E") center / 24px no-repeat, linear-gradient(#4a90f7, #2c6ff0);
}
.note {
    max-width: 826px;
    margin-top: 8px;
    margin-bottom: 26px;
    font-size: 20px;
    line-height: 25px;
    color: #858585;
}
.pop select {
    appearance: none;
    width: 343px;
    height: 37px;
    padding: 0 14px;
    border: none;
    border-radius: 8px;
    background: url("data:image/svg+xml,%3Csvg xmlns='http://www.w3.org/2000/svg' viewBox='0 0 28 29'%3E%3Crect width='28' height='29' rx='6' fill='%23387cf4'/%3E%3Cpath d='M8.500 11.500l5.500-6 5.500 6M8.500 17.500l5.500 6 5.500-6' fill='none' stroke='white' stroke-width='2.600' stroke-linecap='round' stroke-linejoin='round'/%3E%3C/svg%3E") right 4px center / 28px 29px no-repeat #fff;
    box-shadow: 0 1px 3px rgba(0,0,0,0.35);
}
.pop .large {
    width: 424px;
}
.hint {
    margin-left: 14px;
    font-size: 20px;
    color: #858585;
}
.help {
    width: 37px;
    height: 37px;
    margin-top: auto;
    border-radius: 50%;
    background: #fff;
    box-shadow: 0 1px 3px rgba(0,0,0,0.35);
    font-size: 26px;
    font-weight: 500;
}
```
